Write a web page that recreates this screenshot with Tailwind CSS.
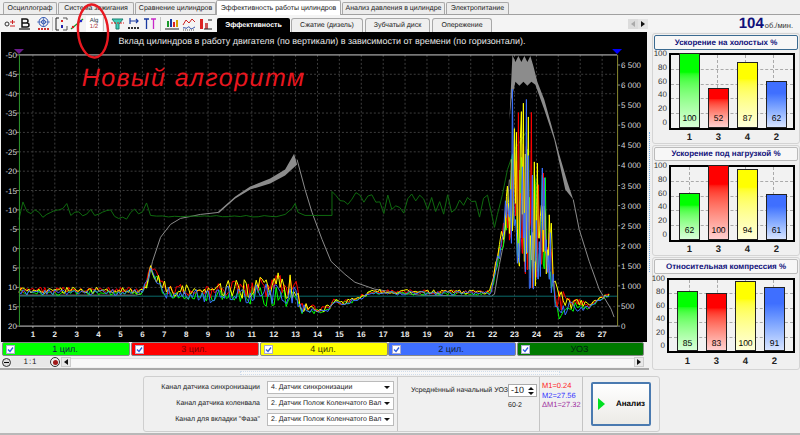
<!DOCTYPE html>
<html><head><meta charset="utf-8"><script src="https://cdn.jsdelivr.net/npm/@tailwindcss/browser@4"></script></head>
<body class="m-0">
<div class="relative w-[800px] h-[435px] overflow-hidden bg-[#f0f0f0] font-['Liberation_Sans',sans-serif] text-[7px] leading-none text-[#222] whitespace-nowrap [text-rendering:geometricPrecision]">

<!-- tabs -->
<div class="flex items-end h-[15px] pl-[3px] border-b border-[#a0a0a0]">
  <div class="w-[54px] h-[12px] flex items-center justify-center bg-[#ececec] border border-b-0 border-[#a8a8a8] rounded-t-[2px]">Осциллограф</div>
  <div class="w-[76px] h-[12px] ml-px flex items-center justify-center bg-[#ececec] border border-b-0 border-[#a8a8a8] rounded-t-[2px]">Система зажигания</div>
  <div class="w-[81px] h-[12px] ml-px flex items-center justify-center bg-[#ececec] border border-b-0 border-[#a8a8a8] rounded-t-[2px]">Сравнение цилиндров</div>
  <div class="w-[125px] h-[15px] -mb-px flex items-center justify-center bg-white border border-b-0 border-[#a8a8a8] rounded-t-[2px]">Эффективность работы цилиндров</div>
  <div class="w-[103px] h-[12px] ml-px flex items-center justify-center bg-[#ececec] border border-b-0 border-[#a8a8a8] rounded-t-[2px]">Анализ давления в цилиндре</div>
  <div class="w-[63px] h-[12px] ml-px flex items-center justify-center bg-[#ececec] border border-b-0 border-[#a8a8a8] rounded-t-[2px]">Электропитание</div>
</div>

<!-- toolbar -->
<div class="flex h-[17px] bg-[#f4f4f4]">
  <div class="flex items-center w-[217px] pl-[4px]">
    <svg class="shrink-0" width="12" height="12" viewBox="0 0 12 12" fill="none"><circle cx="3" cy="6" r="2" stroke="#333"/><path d="M6 4h5M8.500 2v4" stroke="#c22"/><path d="M6 8h5" stroke="#c22"/></svg>
    <svg class="shrink-0 ml-[2px]" width="13" height="12" viewBox="0 0 13 12"><path d="M4 1h4a2 2 0 0 1 0 4h-4zM4 5h5a2 2 0 0 1 0 4h-5z" fill="none" stroke="#111" stroke-width="1.500"/><path d="M1 11h11" stroke="#111" stroke-width="1.200"/></svg>
    <svg class="shrink-0 ml-[5px]" width="15" height="14" viewBox="0 0 15 14" fill="none"><circle cx="7.500" cy="5" r="4.500" stroke="#2a50b0"/><circle cx="7.500" cy="5" r="2" stroke="#2a50b0"/><path d="M1 5h13M7.500 0v10" stroke="#2a50b0" stroke-width=".6"/><path d="M2 12h11" stroke="#c33" stroke-width="2" stroke-dasharray="2 1"/></svg>
    <div class="shrink-0 w-px h-[14px] bg-[#c4c4c4] ml-px mr-[2px]"></div>
    <svg class="shrink-0" width="13" height="14" viewBox="0 0 13 14" fill="none"><path d="M1 1v12h3M1 1h3" stroke="#222"/><path d="M8 1h4v2M12 9v4h-4" stroke="#555"/><path d="M7 3v2" stroke="#d22" stroke-width="2"/><path d="M7 8v3" stroke="#22a" stroke-width="2"/></svg>
    <svg class="shrink-0 ml-[2px]" width="14" height="14" viewBox="0 0 14 14" fill="none"><path d="M1 12L13 2" stroke="#1a9a2a" stroke-width="1.300"/><circle cx="3" cy="10" r="1.200" fill="#d22"/><circle cx="11" cy="4" r="1.200" fill="#22c"/></svg>
    <div class="shrink-0 ml-[2px] w-[16px] h-[16px] bg-white flex flex-col items-center justify-center text-[6px] text-[#234]"><span>Alg</span><span class="text-[#a44]">1/2</span></div>
    <div class="shrink-0 w-px h-[14px] bg-[#c4c4c4] ml-px mr-[6px]"></div>
    <svg class="shrink-0" width="15" height="14" viewBox="0 0 15 14" fill="none"><path d="M2 2h11L9 7v5H6V7z" fill="#3fd0b8" stroke="#1a7f70"/><path d="M1 6h13" stroke="#d22" stroke-dasharray="2 1"/></svg>
    <svg class="shrink-0 ml-[2px]" width="14" height="14" viewBox="0 0 14 14" fill="none"><path d="M3 1v6M3 4h8M9 2l2 2-2 2" stroke="#1a3aa0" stroke-width="1.200"/><path d="M1 11h12" stroke="#333" stroke-width="2" stroke-dasharray="2 1"/></svg>
    <svg class="shrink-0 ml-[2px]" width="14" height="14" viewBox="0 0 14 14" fill="none"><path d="M1 2h5M3.500 2v10" stroke="#1a3aa0" stroke-width="1.300"/><path d="M8 2h5M10.500 2v10" stroke="#c828c8" stroke-width="1.300"/></svg>
    <div class="shrink-0 w-px h-[14px] bg-[#c4c4c4] ml-[3px] mr-[4px]"></div>
    <svg class="shrink-0" width="14" height="14" viewBox="0 0 14 14"><rect x="2" y="4" width="2" height="6" fill="#1a9a2a"/><rect x="5" y="2" width="2" height="8" fill="#1a3aa0"/><rect x="8" y="5" width="2" height="5" fill="#d22"/><rect x="11" y="3" width="2" height="7" fill="#d8a000"/><path d="M0 12h14" stroke="#222"/></svg>
    <svg class="shrink-0 ml-[3px]" width="14" height="14" viewBox="0 0 14 14" fill="none"><path d="M1 8L4 3l3 3 3-4 3 3" stroke="#c22"/><path d="M1 11c2-1 3 1 4 0s2-2 3 0 3 0 5-1" stroke="#1a3aa0"/><path d="M1 13h12" stroke="#555" stroke-dasharray="1 1"/></svg>
    <svg class="shrink-0 ml-[3px]" width="14" height="14" viewBox="0 0 14 14"><rect x="1" y="2" width="3" height="10" fill="#d22"/><rect x="6" y="6" width="3" height="6" fill="#c55"/><path d="M5 12h8M9 3h4" stroke="#222"/></svg>
  </div>
  <div class="flex items-end gap-px w-[275px] h-full">
    <div class="w-[73px] h-[14px] flex items-center justify-center bg-black text-white font-bold rounded-t-[2px]">Эффективность</div>
    <div class="w-[72px] h-[14px] flex items-center justify-center bg-[#efefef] border border-b-0 border-[#a8a8a8] rounded-t-[3px]">Сжатие (дизель)</div>
    <div class="w-[65px] h-[14px] ml-px flex items-center justify-center bg-[#efefef] border border-b-0 border-[#a8a8a8] rounded-t-[3px]">Зубчатый диск</div>
    <div class="w-[60px] h-[14px] ml-px flex items-center justify-center bg-[#efefef] border border-b-0 border-[#a8a8a8] rounded-t-[3px]">Опережение</div>
  </div>
  <div class="flex items-center ml-[136px] h-full">
    <div class="w-[10px] h-[10px] flex items-center justify-center bg-[#dcdcdc]"><svg width="4" height="6"><path d="M4 0v6L0 3z" fill="#aaa"/></svg></div>
    <div class="w-[10px] h-[10px] flex items-center justify-center bg-[#e4e4e4]"><svg width="4" height="6"><path d="M0 0v6l4-3z" fill="#111"/></svg></div>
  </div>
  <div class="flex items-baseline ml-auto pr-[7px] pt-[1px] text-[#10107a]">
    <span class="text-[15px] font-bold">104</span><span class="ml-px text-[7.500px] text-[#333]">об./мин.</span>
  </div>
</div>

<!-- main -->
<div class="flex h-[338px]">
  <div class="w-[649px] pl-[1px] flex flex-col">
    <svg id="chart" class="block bg-black text-[8px]" width="646" height="311" viewBox="1 32 646 311">
      <text x="322" y="44" text-anchor="middle" class="fill-[#e8e8e8] text-[9px]">Вклад цилиндров в работу двигателя (по вертикали) в зависимости от времени (по горизонтали).</text>
      <g id="grid" stroke="#3c3c3c" stroke-dasharray="2 2"></g>
      <g id="ticks" stroke="#8a8a8a"></g>
      <path id="gline" fill="none" stroke="#8c8c8c"></path>
      <polygon points="218,212 235,197 250,187 270,179 285,170 294,154 297,165 285,176 270,184 250,190 235,199 218,214" fill="#8c8c8c"></polygon>
      <polygon points="510,120 513,55 516,62 519,56 522,62 525,56 528,62 531,56 534,66 538,82 545,100 552,125 560,155 568,182 574,200 566,190 555,140 545,110 536,85 532,82 528,86 524,82 520,86 516,82 512,100" fill="#8c8c8c"></polygon>
      <path id="uoz" fill="none" stroke="#0f6a0f"></path>
      <path d="M18 297H618" stroke="#0a6a6a"></path>
      <path id="c1" fill="none" stroke="#00ff00"></path>
      <path id="c3" fill="none" stroke="#ff0000"></path>
      <path id="c4" fill="none" stroke="#ffff00"></path>
      <path id="c2" fill="none" stroke="#3a70ff"></path>
      <path d="M18 55H618M18 327H618" stroke="#d0d0d0"></path>
      <path d="M18.500 55V327" stroke="#2f9a2f"></path>
      <path d="M618.500 55V327" stroke="#8a8a30"></path>
      <path d="M13 49H23L18 54Z" fill="#6a1b8a"></path>
      <path d="M613 49H623L618 54Z" fill="#0000ff"></path>
      <g id="ly" class="fill-[#d8d8d8]" text-anchor="end"></g>
      <g id="ry" class="fill-[#d8d8d8]"></g>
      <g id="lx" class="fill-[#e8e8e8] font-bold" text-anchor="middle"></g>
      <text x="81" y="86" class="fill-[#e8161f] italic text-[25px] tracking-[1.500px]">Новый алгоритм</text>
    </svg>

    <!-- legend -->
    <div class="flex h-[15px] pl-[1px] bg-[#f0f0f0]">
      <label class="w-[128px] h-[14px] flex items-center pl-[3px] bg-[#00ff00] rounded-[2px] border border-[#888]"><span class="w-[9px] h-[9px] bg-white border border-[#aac] flex items-center justify-center"><svg width="7" height="7"><path d="M1 3.500l2 2 3-4" fill="none" stroke="#2a5ae0" stroke-width="1.300"/></svg></span><span class="flex-1 text-center text-[9px] text-[#124] -ml-[14px]">1 цил.</span></label>
      <label class="w-[128px] h-[14px] ml-px flex items-center pl-[3px] bg-[#ff0000] rounded-[2px] border border-[#888]"><span class="w-[9px] h-[9px] bg-white border border-[#aac] flex items-center justify-center"><svg width="7" height="7"><path d="M1 3.500l2 2 3-4" fill="none" stroke="#2a5ae0" stroke-width="1.300"/></svg></span><span class="flex-1 text-center text-[9px] text-[#700] -ml-[14px]">3 цил.</span></label>
      <label class="w-[128px] h-[14px] ml-px flex items-center pl-[3px] bg-[#ffff00] rounded-[2px] border border-[#888]"><span class="w-[9px] h-[9px] bg-white border border-[#aac] flex items-center justify-center"><svg width="7" height="7"><path d="M1 3.500l2 2 3-4" fill="none" stroke="#2a5ae0" stroke-width="1.300"/></svg></span><span class="flex-1 text-center text-[9px] text-[#330] -ml-[14px]">4 цил.</span></label>
      <label class="w-[128px] h-[14px] flex items-center pl-[3px] bg-[#3f6fff] rounded-[2px] border border-[#888]"><span class="w-[9px] h-[9px] bg-white border border-[#aac] flex items-center justify-center"><svg width="7" height="7"><path d="M1 3.500l2 2 3-4" fill="none" stroke="#2a5ae0" stroke-width="1.300"/></svg></span><span class="flex-1 text-center text-[9px] text-[#123] -ml-[14px]">2 цил.</span></label>
      <label class="w-[127px] h-[14px] ml-px flex items-center pl-[3px] bg-[#007a00] rounded-[2px] border border-[#888]"><span class="w-[9px] h-[9px] bg-white border border-[#aac] flex items-center justify-center"><svg width="7" height="7"><path d="M1 3.500l2 2 3-4" fill="none" stroke="#2a5ae0" stroke-width="1.300"/></svg></span><span class="flex-1 text-center text-[9px] text-[#021] -ml-[14px]">УОЗ</span></label>
    </div>

    <!-- zoom + scroll -->
    <div class="flex items-center h-[10px] pl-[1px]">
      <div class="w-[9px] h-[9px] rounded-full border border-[#333] bg-[#ddd] flex items-center justify-center"><div class="w-[5px] h-px bg-black"></div></div>
      <div class="w-[39px] h-[10px] flex items-center justify-center bg-[#e8e8e8] text-[8px] tracking-[1px]">1:1</div>
      <div class="w-[10px] h-[10px] rounded-full border border-[#333] bg-[#eee] flex items-center justify-center"><div class="w-[5px] h-[5px] rounded-full bg-[#a01818]"></div></div>
      <div class="w-[10px] h-[10px] ml-px flex items-center justify-center bg-[#e8e8e8] border border-[#ccc]"><svg width="4" height="6"><path d="M4 0v6L0 3z" fill="#111"/></svg></div>
      <div class="w-[563px] h-[9px] bg-[#f7f7f7] border-t border-[#ddd]"></div>
      <div class="w-[10px] h-[10px] flex items-center justify-center bg-[#e8e8e8] border border-[#ccc]"><svg width="4" height="6"><path d="M0 0v6l4-3z" fill="#111"/></svg></div>
    </div>
    <div class="h-[2px] mt-[1px] -ml-[1px] bg-[#a8a8a8]"></div>
  </div>

  <!-- splitter -->
  <div class="flex flex-col justify-center w-[3px] pb-[98px] pt-[100px]">
    <div class="h-full w-[3px] border-l border-dotted border-[#7ab0e8]"></div>
  </div>

  <!-- right panels -->
  <div class="w-[148px] flex flex-col pt-[1px]">
    <section class="h-[111px] border border-[#d4d4d4] rounded-[3px] px-px pt-px">
      <div class="h-[15px] flex items-center justify-center font-bold text-[8px] text-[#10107a] bg-[#f7f7f7] border border-[#3a6a90] rounded-[2px]">Ускорение на холостых %</div>
      <div class="flex mt-[3px]">
        <div class="w-[15px] h-[77px] flex flex-col justify-between items-end pr-[2px] text-[8px] -my-[3px] text-[#333]"><span>100</span><span>80</span><span>60</span><span>40</span><span>20</span><span>0</span></div>
        <div class="relative flex items-end w-[126px] h-[77px] pl-[8px] gap-[8px] border-2 border-black bg-[#f2f2f2]">
          <div class="absolute inset-0 flex flex-col justify-evenly"><div class="border-t border-dashed border-[#aaa]"></div><div class="border-t border-dashed border-[#aaa]"></div><div class="border-t border-dashed border-[#aaa]"></div><div class="border-t border-dashed border-[#aaa]"></div></div>
          <div class="absolute inset-0 flex justify-around pl-[4px] pr-[6px]"><div class="border-l border-dashed border-[#aaa]"></div><div class="border-l border-dashed border-[#aaa]"></div><div class="border-l border-dashed border-[#aaa]"></div><div class="border-l border-dashed border-[#aaa]"></div></div>
          <div class="relative flex items-end justify-center pb-[5px] w-[21px] h-[75px] border border-[#222] bg-linear-to-b from-[#00ff00] from-25% to-[#d8ffd8] text-[8.500px] text-black">100</div>
          <div class="relative flex items-end justify-center pb-[5px] w-[21px] h-[40px] border border-[#222] bg-linear-to-b from-[#ff0000] from-25% to-[#ffd0d0] text-[8.500px] text-black">52</div>
          <div class="relative flex items-end justify-center pb-[5px] w-[21px] h-[66px] border border-[#222] bg-linear-to-b from-[#ffff00] from-25% to-[#ffffd8] text-[8.500px] text-black">87</div>
          <div class="relative flex items-end justify-center pb-[5px] w-[21px] h-[47px] border border-[#222] bg-linear-to-b from-[#3f6fff] from-25% to-[#d8e4ff] text-[8.500px] text-black">62</div>
        </div>
      </div>
      <div class="flex pl-[25px] gap-[8px] mt-[3px] text-[9.500px] font-bold"><span class="w-[21px] text-center">1</span><span class="w-[21px] text-center">3</span><span class="w-[21px] text-center">4</span><span class="w-[21px] text-center">2</span></div>
    </section>
    <section class="h-[111px] mt-px border border-[#d4d4d4] rounded-[3px] px-px pt-px">
      <div class="h-[14px] flex items-center justify-center font-bold text-[8px] text-[#10107a] bg-[#f7f7f7] border border-[#bbb] rounded-[2px]">Ускорение под нагрузкой %</div>
      <div class="flex mt-[4px]">
        <div class="w-[15px] h-[77px] flex flex-col justify-between items-end pr-[2px] text-[8px] -my-[3px] text-[#333]"><span>100</span><span>80</span><span>60</span><span>40</span><span>20</span><span>0</span></div>
        <div class="relative flex items-end w-[126px] h-[77px] pl-[8px] gap-[8px] border-2 border-black bg-[#f2f2f2]">
          <div class="absolute inset-0 flex flex-col justify-evenly"><div class="border-t border-dashed border-[#aaa]"></div><div class="border-t border-dashed border-[#aaa]"></div><div class="border-t border-dashed border-[#aaa]"></div><div class="border-t border-dashed border-[#aaa]"></div></div>
          <div class="absolute inset-0 flex justify-around pl-[4px] pr-[6px]"><div class="border-l border-dashed border-[#aaa]"></div><div class="border-l border-dashed border-[#aaa]"></div><div class="border-l border-dashed border-[#aaa]"></div><div class="border-l border-dashed border-[#aaa]"></div></div>
          <div class="relative flex items-end justify-center pb-[5px] w-[21px] h-[47px] border border-[#222] bg-linear-to-b from-[#00ff00] from-25% to-[#d8ffd8] text-[8.500px] text-black">62</div>
          <div class="relative flex items-end justify-center pb-[5px] w-[21px] h-[75px] border border-[#222] bg-linear-to-b from-[#ff0000] from-25% to-[#ffd0d0] text-[8.500px] text-black">100</div>
          <div class="relative flex items-end justify-center pb-[5px] w-[21px] h-[71px] border border-[#222] bg-linear-to-b from-[#ffff00] from-25% to-[#ffffd8] text-[8.500px] text-black">94</div>
          <div class="relative flex items-end justify-center pb-[5px] w-[21px] h-[46px] border border-[#222] bg-linear-to-b from-[#3f6fff] from-25% to-[#d8e4ff] text-[8.500px] text-black">61</div>
        </div>
      </div>
      <div class="flex pl-[25px] gap-[8px] mt-[3px] text-[9.500px] font-bold"><span class="w-[21px] text-center">1</span><span class="w-[21px] text-center">3</span><span class="w-[21px] text-center">4</span><span class="w-[21px] text-center">2</span></div>
    </section>
    <section class="h-[113px] mt-px border border-[#d4d4d4] rounded-[3px] px-px pt-px">
      <div class="h-[15px] flex items-center justify-center font-bold text-[8px] text-[#10107a] bg-[#f7f7f7] border border-[#bbb] rounded-[2px]">Относительная компрессия %</div>
      <div class="flex mt-[4px]">
        <div class="w-[13px] h-[75px] flex flex-col justify-between items-end pr-[2px] text-[8px] -my-[3px] text-[#333]"><span>100</span><span>80</span><span>60</span><span>40</span><span>20</span><span>0</span></div>
        <div class="relative flex items-end w-[128px] h-[75px] pl-[8px] gap-[8px] border-2 border-black bg-[#f2f2f2]">
          <div class="absolute inset-0 flex flex-col justify-evenly"><div class="border-t border-dashed border-[#aaa]"></div><div class="border-t border-dashed border-[#aaa]"></div><div class="border-t border-dashed border-[#aaa]"></div><div class="border-t border-dashed border-[#aaa]"></div></div>
          <div class="absolute inset-0 flex justify-around pl-[6px] pr-[6px]"><div class="border-l border-dashed border-[#aaa]"></div><div class="border-l border-dashed border-[#aaa]"></div><div class="border-l border-dashed border-[#aaa]"></div><div class="border-l border-dashed border-[#aaa]"></div></div>
          <div class="relative flex items-end justify-center pb-[3px] w-[21px] h-[60px] border border-[#222] bg-linear-to-b from-[#00ff00] from-25% to-[#d8ffd8] text-[8.500px] text-black">85</div>
          <div class="relative flex items-end justify-center pb-[3px] w-[21px] h-[58px] border border-[#222] bg-linear-to-b from-[#ff0000] from-25% to-[#ffd0d0] text-[8.500px] text-black">83</div>
          <div class="relative flex items-end justify-center pb-[3px] w-[21px] h-[70px] border border-[#222] bg-linear-to-b from-[#ffff00] from-25% to-[#ffffd8] text-[8.500px] text-black">100</div>
          <div class="relative flex items-end justify-center pb-[3px] w-[21px] h-[64px] border border-[#222] bg-linear-to-b from-[#3f6fff] from-25% to-[#d8e4ff] text-[8.500px] text-black">91</div>
        </div>
      </div>
      <div class="flex pl-[23px] gap-[8px] mt-[4px] text-[9.500px] font-bold"><span class="w-[21px] text-center">1</span><span class="w-[21px] text-center">3</span><span class="w-[21px] text-center">4</span><span class="w-[21px] text-center">2</span></div>
    </section>
  </div>
</div>

<!-- bottom -->
<div class="relative h-[65px] pl-[143px] pt-[6px]">
  <div class="absolute left-[240px] top-[1px] w-[320px] h-[4px] border border-[#cfdcec] border-dotted bg-[#f8f8f8]"></div>
  <div class="flex w-[517px] h-[56px] border border-[#cfcfcf] rounded-[3px]">
    <div class="w-[118px] flex flex-col items-end gap-[7px] pt-[7px] pr-[2px]">
      <span class="h-[9px]">Канал датчика синхронизации</span>
      <span class="h-[9px]">Канал датчика коленвала</span>
      <span class="h-[9px]">Канал для вкладки "Фаза"</span>
    </div>
    <div class="flex flex-col gap-[3px] pt-[4px] pl-[5px] w-[136px] border-r border-[#c4c4c4]">
      <div class="w-[127px] h-[13px] flex items-center justify-between px-[3px] bg-white border border-[#bbb]"><span>4. Датчик синхронизации</span><svg class="shrink-0" width="6" height="3"><path d="M0 0h6L3 3z" fill="#111"/></svg></div>
      <div class="w-[127px] h-[13px] flex items-center justify-between px-[3px] bg-white border border-[#bbb]"><span>2. Датчик Полож Коленчатого Вал</span><svg class="shrink-0" width="6" height="3"><path d="M0 0h6L3 3z" fill="#111"/></svg></div>
      <div class="w-[127px] h-[13px] flex items-center justify-between px-[3px] bg-white border border-[#bbb]"><span>2. Датчик Полож Коленчатого Вал</span><svg class="shrink-0" width="6" height="3"><path d="M0 0h6L3 3z" fill="#111"/></svg></div>
    </div>
    <div class="w-[142px] flex flex-col border-r border-[#c4c4c4] pt-[7px] pl-[13px]">
      <div class="flex items-center gap-[2px]"><span class="w-[95px]">Усреднённый начальный УОЗ</span>
        <div class="w-[29px] h-[13px] shrink-0 flex items-center justify-between px-[2px] bg-white border border-[#aaa]"><span class="text-[9px]">-10</span><svg width="6" height="10"><path d="M0 4h6L3 1zM0 6h6L3 9z" fill="#111"/></svg></div>
      </div>
      <span class="mt-[5px] ml-[97px]">60-2</span>
    </div>
    <div class="w-[43px] flex flex-col gap-[2px] pt-[5px] pl-[2px] text-[7.500px] border-r border-[#c4c4c4]">
      <span class="text-[#ff2020]">M1=0.24</span><span class="text-[#3030ff]">M2=27.56</span><span class="text-[#a030a0]">ΔM1=27.32</span>
    </div>
    <div class="ml-[8px] mt-[5px] w-[60px] h-[44px] flex items-center pl-[5px] gap-[11px] border-2 border-[#4a7ab0] rounded-[2px] bg-linear-to-b from-white to-[#ecebe6] font-bold text-[8px] text-black">
      <svg class="shrink-0" width="7" height="12"><path d="M0 0l7 6-7 6z" fill="#00e020"/></svg><span>Анализ</span>
    </div>
  </div>
  <div class="absolute bottom-0 left-0 w-full h-[2px] bg-[#b8b8b8]"></div>
</div>

<!-- annotation over the toolbar -->
<svg class="absolute left-[70px] top-0 pointer-events-none" width="48" height="64" viewBox="0 0 48 64" fill="none"><ellipse cx="23" cy="31" rx="15" ry="26.500" stroke="#e81820" stroke-width="2.400" transform="rotate(-4 23 31)"/></svg>
</div>
<script>
(function(){
  var s=12345;function R(){s=(s*1664525+1013904223)%4294967296;return s/4294967296;}
  var NS="http://www.w3.org/2000/svg";
  function el(g,tag,a,t){var e=document.createElementNS(NS,tag);for(var k in a)e.setAttribute(k,a[k]);if(t!=null)e.textContent=t;document.getElementById(g).appendChild(e);}
  var i,x,y;
  for(i=0;i<27;i++){x=32+21.96*i;el("grid","path",{d:"M"+x.toFixed(1)+" 55V327"});el("lx","text",{x:x.toFixed(1),y:338},String(i+1));el("ticks","path",{d:"M"+x.toFixed(1)+" 327v2"});}
  for(i=0;i<=14;i++){y=55+i*19.43;if(i>0&&i<14)el("grid","path",{d:"M18 "+y.toFixed(1)+"H618"});el("ly","text",{x:16,y:(y+3).toFixed(1)},String(-50+5*i));el("ticks","path",{d:"M15 "+y.toFixed(1)+"h3"});}
  for(i=0;i<=13;i++){y=327-i*20.15;var v=i*500,t=v>=1000?Math.floor(v/1000)+" "+(v%1000===0?"000":"500"):String(v);el("ry","text",{x:622,y:(y+3).toFixed(1)},t);el("ticks","path",{d:"M618 "+y.toFixed(1)+"h3"});}

  function lerp(T,x,col){for(var j=1;j<T.length;j++){if(x<=T[j][0]){var a=T[j-1],b=T[j],f=(x-a[0])/(b[0]-a[0]);return a[col]+(b[col]-a[col])*f;}}return T[T.length-1][col];}
  var E=[[18,288,296],[140,288,296],[146,278,292],[150,265,270],[155,268,285],[165,283,300],[200,287,302],[216,287,305],[220,281,302],[250,280,305],[270,275,308],[292,268,308],[297,285,310],[300,300,315],[320,308,316],[330,305,312],[333,290,308],[340,302,308],[360,296,302],[370,290,296],[490,291,296],[493,280,297],[497,255,270],[503,215,260],[508,160,240],[513,55,250],[520,60,270],[530,75,290],[537,110,290],[545,120,270],[549,160,280],[553,240,300],[557,280,327],[562,285,322],[570,297,315],[580,300,312],[590,304,312],[600,298,302],[610,294,298]];
  function series(id,lo,hi,p){var d="",x=18;while(x<=610){var t=lerp(E,x,1),b=lerp(E,x,2),big=(x>=505&&x<552);var r=lo+(hi-lo)*R();if(big)r=Math.pow(R(),p);var y=t+(b-t)*r;d+=(d?"L":"M")+x+" "+y.toFixed(1);x+=big?1:2;}document.getElementById(id).setAttribute("d",d);}
  series("c1",0.3,1,0.35);series("c3",0,0.7,0.5);series("c4",0,0.8,0.4);series("c2",0.25,1,0.4);

  var G=[[18,296],[135,296],[140,295],[147,285],[152,262],[160,238],[170,225],[180,219],[200,215],[218,213]];
  var G2=[[297,160],[305,190],[312,213],[322,240],[331,262],[345,275],[355,283],[375,290],[395,293],[420,296],[492,297],[495,295],[500,265],[505,240],[510,180]];
  var G3=[[574,200],[580,230],[590,262],[600,290],[612,310],[615,318]];
  function pts(a){return a.map(function(p,i){return (i?"L":"M")+p[0]+" "+p[1];}).join("");}
  document.getElementById("gline").setAttribute("d",pts(G)+pts(G2)+pts(G3));

  var U=[],x2;
  for(x2=18;x2<150;x2+=4)U.push([x2,208+R()*12-(R()<0.2?6:0)]);
  for(x2=150;x2<280;x2+=6)U.push([x2,216+R()*1.5]);
  U.push([285,215],[292,209],[295,204],[298,213],[305,216],[332,216],[332,192]);
  for(x2=336;x2<492;x2+=4)U.push([x2,192+R()*26*(x2<380?.7:1)]);
  U.push([492,214],[495,228],[498,215],[503,195],[508,170],[515,150],[522,140],[527,132]);
  document.getElementById("uoz").setAttribute("d",pts(U));
})();
</script>
</body></html>
